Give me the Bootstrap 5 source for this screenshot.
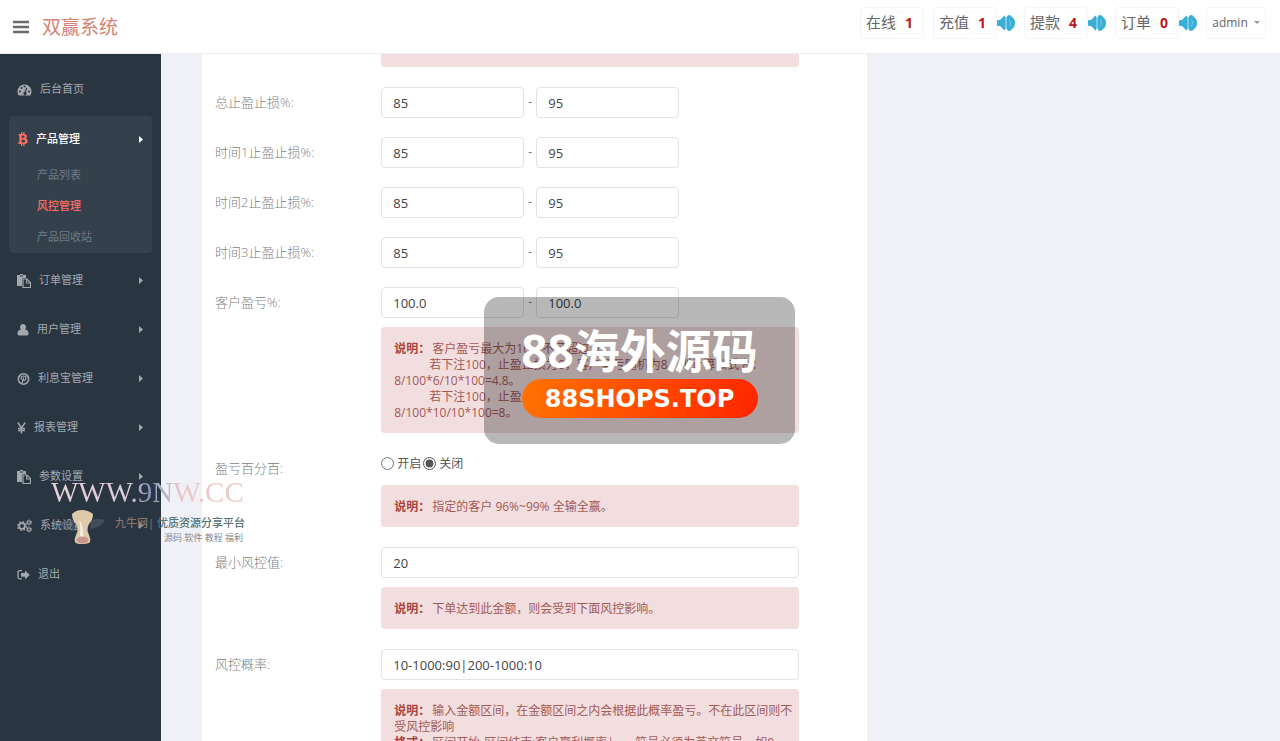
<!DOCTYPE html>
<html lang="zh-CN">
<head>
<meta charset="utf-8">
<meta name="viewport" content="width=device-width, initial-scale=1">
<title>双赢系统</title>
<link href="https://cdn.jsdelivr.net/npm/bootstrap@5.3.0/dist/css/bootstrap.min.css" rel="stylesheet">
<style>
body{font-family:"Open Sans","Noto Sans CJK SC",sans-serif;font-size:12px;color:#797979;background:#f0f0f7}
a{text-decoration:none}
.topbar{height:54px;padding:0 14px 0 13px;background:#fff;border-bottom:1px solid #eeeef2}
.burger{width:16px;height:20px;color:#6b6b6b}
.brand{font-size:19px;font-weight:400;color:#d58273;margin-left:13px;padding-top:2px}
.tools{gap:9px;padding-bottom:8px}
.stat{height:32px;width:64px;border:1px solid #f5f5f5;border-radius:4px;font-size:15px;color:#666;background:#fff;padding:0 0 0 5px}
.stat b{width:26px;border:1px solid #f9f9f9;color:#c01515;font-size:14px}
.user{height:32px;width:60px;border:1px solid #f5f5f5;border-radius:4px;font-size:12px;color:#666}
.user:after{margin-left:6px!important;border-width:3px!important;border-bottom:0!important;color:#999}
.side{width:161px;background:#2a3542;padding-top:11px;font-size:11px}
.side a{color:#a3a8ae}
.item{height:49px;padding:0 18px 0 17px}
.item svg.ico{height:14px;margin-right:8px;flex:none;fill:currentColor}
.item .caret{width:4px;height:7px;margin-left:auto;fill:currentColor}
.side .group{margin:2px 9px 3px;background:#35404d;border-radius:4px;padding:2px 0 0}
.group .item{height:42px;padding:0 9px;color:#fff;font-weight:500}
.side .subitem{display:flex;align-items:center;height:31px;padding-left:28px;color:#707b87}
.side .subitem.active{color:#ff6c60;font-weight:500}
.content{padding:0 41px}
.panel{max-width:665px;padding:0 13px;background:#fff}
.panel .row{--bs-gutter-x:26px;margin-bottom:20px}
.panel .lab{font-size:13px;line-height:30px;font-weight:300;color:#808080}
.panel .form-control{height:31px;margin-bottom:-1px;padding:0 11px;font-size:13px;color:#444;border:1px solid #e2e2e4;border-radius:4px}
.half{width:143px}
.dash{width:12px;text-align:center}
.note{background:#f2dede;border-radius:4px;padding:14px 6px 12px 13px;line-height:16px;color:#a25a58;margin-top:10px}
.note b{color:#a94442;margin-right:2px}
.note .in{margin-left:35px}
.note.cut{margin-top:0;height:13px;padding:0;border-radius:0 0 4px 4px}
.note.open{padding-bottom:24px}
.radios{height:22px;color:#555}
.radios input{width:13px;height:13px;margin:0 3px 2px 0;accent-color:#555}
.radios label{margin-right:2px}
.stamp{position:absolute;left:484px;top:297px;width:311px;height:147px;border-radius:15px;background:rgba(0,0,0,.28);color:#fff;pointer-events:none;padding-top:25px}
.stamp .name{font-size:46px;line-height:57px;font-weight:700}
.stamp .site{width:236px;height:39px;border-radius:20px;background:linear-gradient(100deg,#ff7200,#ff2600);font:bold 24px/41px "DejaVu Sans",sans-serif}
.promo{position:absolute;left:51px;top:474px;width:196px;pointer-events:none}
.promo .url{font:29px/36px "Liberation Serif",serif;background:linear-gradient(90deg,#e9d2da 0,#d8cbd8 40%,#8a92bb 50%,#b4b4ce 58%,#eac8ca 66%,#eecaca);-webkit-background-clip:text;background-clip:text;color:transparent;white-space:nowrap}
.promo svg{position:absolute;left:8px;top:36px}
.promo .tag{margin:4px 2px 0 0;font-size:11px;line-height:18px;font-weight:500;color:#567476}
.promo .tag span{color:#877468}
.promo .kinds{font-size:9px;line-height:11px;margin-right:4px;color:#888}
</style>
</head>
<body class="vh-100 overflow-hidden d-flex flex-column position-relative">
<svg class="d-none">
  <symbol id="caret" viewBox="0 0 4 7"><path d="M0 0l4 3.500-4 3.500z"/></symbol>
  <symbol id="paste" viewBox="0 0 14 14"><path d="M0 1h3V0h3v1h3v3H6L5 5v7H0z"/><path d="M3 2h3" stroke="#2a3542"/><path d="M6 5h4l3.500 3.500v5H6z" fill="#2a3542" stroke="currentColor" stroke-width="1.200"/><path d="M9.700 5v4h4" fill="none" stroke="currentColor" stroke-width="1.200"/></symbol>
  <symbol id="sound" viewBox="0 0 18 16"><path fill="#39aed6" d="M0 6q0-1 1-1h2l4-4q1-1 1 0v14q0 1-1 0l-4-4H1q-1 0-1-1zM10 2q0-2 2-2 2 0 3 2 3 2 3 6t-3 6q-1 2-3 2-2 0-2-2z"/><path fill="#7ccbe6" d="M8 2h2v12H8z"/><path d="M12.500 4.500q2 3.500 0 7" fill="none" stroke="#7ccbe6"/></symbol>
</svg>

<header class="topbar d-flex align-items-center flex-shrink-0">
  <button class="burger btn p-0 border-0 d-flex align-items-center" type="button" aria-label="菜单"><svg width="16" height="14" viewBox="0 0 16 14"><path d="M0 2h16M0 7h16M0 12h16" stroke="currentColor" stroke-width="2.400"/></svg></button>
  <a class="brand" href="#">双赢系统</a>
  <div class="tools d-flex align-items-center ms-auto">
    <a class="stat d-flex align-items-center" href="#">在线<b class="text-center">1</b></a>
    <div class="d-flex align-items-center"><a class="stat d-flex align-items-center" href="#">充值<b class="text-center">1</b></a><svg width="18" height="16"><use href="#sound"/></svg></div>
    <div class="d-flex align-items-center"><a class="stat d-flex align-items-center" href="#">提款<b class="text-center">4</b></a><svg width="18" height="16"><use href="#sound"/></svg></div>
    <div class="d-flex align-items-center"><a class="stat d-flex align-items-center" href="#">订单<b class="text-center">0</b></a><svg width="18" height="16"><use href="#sound"/></svg></div>
    <button class="user btn dropdown-toggle p-0 bg-white d-flex align-items-center justify-content-center" type="button" data-bs-toggle="dropdown">admin</button>
  </div>
</header>

<div class="d-flex flex-grow-1 overflow-hidden">
  <nav class="side flex-shrink-0">
    <a class="item d-flex align-items-center" href="#"><svg class="ico" width="15" viewBox="0 0 15 14"><path fill-rule="evenodd" d="M7.500 1.500A7 7 0 0 0 .500 8.500q0 2 1.200 4h11.600q1.200-2 1.200-4a7 7 0 0 0-7-7zM2 8.500a1 1 0 1 1 2 0a1 1 0 1 1-2 0zM3.500 5a1 1 0 1 1 2 0a1 1 0 1 1-2 0zM6.500 3.600a1 1 0 1 1 2 0a1 1 0 1 1-2 0zM11 8.500a1 1 0 1 1 2 0a1 1 0 1 1-2 0zM9.200 4.500l1 .4-1.300 4.200a1.600 1.600 0 1 1-1.200-.3z"/></svg>后台首页</a>
    <div class="group">
      <a class="item d-flex align-items-center text-white" href="#"><svg class="ico" width="10" viewBox="0 0 10 14"><path fill="#ff6c60" fill-rule="evenodd" d="M.500 2H3V0h1.200v2h1V0h1.300v2.100q2.500.4 2.500 2.400 0 1.500-1.400 2.100Q9.700 7.100 9.700 9q0 2.700-3.200 3V14H5.200v-2h-1v2H3v-2H0l.3-1.500h1v-7H.500zM3.700 3.500v2.600q3 .2 3-1.300t-3-1.300zM3.700 7.500v3q3.500.2 3.500-1.500t-3.500-1.500z"/></svg>产品管理<svg class="caret"><use href="#caret"/></svg></a>
      <a class="subitem" href="#">产品列表</a>
      <a class="subitem active" href="#">风控管理</a>
      <a class="subitem" href="#">产品回收站</a>
    </div>
    <a class="item d-flex align-items-center" href="#"><svg class="ico" width="14"><use href="#paste"/></svg>订单管理<svg class="caret"><use href="#caret"/></svg></a>
    <a class="item d-flex align-items-center" href="#"><svg class="ico" width="12" viewBox="0 0 12 14"><path d="M6 1a3 3.300 0 0 1 2.200 5.600Q11.500 7 11.500 10.500 11.500 12.500 10 12.500H2Q.500 12.500.500 10.500.500 7 3.800 6.600A3 3.300 0 0 1 6 1z"/></svg>用户管理<svg class="caret"><use href="#caret"/></svg></a>
    <a class="item d-flex align-items-center" href="#"><svg class="ico" width="13" viewBox="0 0 13 14"><circle cx="6.500" cy="7" r="5.200" fill="none" stroke="currentColor" stroke-width="1.600"/><path d="M5.200 11L6.500 5.500M4.500 7.500Q3.300 4 6.500 4t2.400 2.800Q8.200 9 6.300 8.300" fill="none" stroke="currentColor" stroke-width="1.200"/></svg>利息宝管理<svg class="caret"><use href="#caret"/></svg></a>
    <a class="item d-flex align-items-center" href="#"><svg class="ico" width="9" viewBox="0 0 9 14"><path d="M.800 1.500l3.700 5.500 3.700-5.500M4.500 7v5.500M1 7.500h7M1 9.600h7" fill="none" stroke="currentColor" stroke-width="1.500"/></svg>报表管理<svg class="caret"><use href="#caret"/></svg></a>
    <a class="item d-flex align-items-center" href="#"><svg class="ico" width="14"><use href="#paste"/></svg>参数设置<svg class="caret"><use href="#caret"/></svg></a>
    <a class="item d-flex align-items-center" href="#"><svg class="ico" width="15" viewBox="0 0 15 14"><g fill="none" stroke="currentColor"><circle cx="5" cy="7" r="2.900" stroke-width="1.800"/><circle cx="5" cy="7" r="4.300" stroke-width="1.400" stroke-dasharray="1.700 1.680"/><circle cx="12" cy="3.500" r="1.500" stroke-width="1.200"/><circle cx="12" cy="3.500" r="2.500" stroke-dasharray="1.100 .860"/><circle cx="12" cy="10.500" r="1.500" stroke-width="1.200"/><circle cx="12" cy="10.500" r="2.500" stroke-dasharray="1.100 .860"/></g></svg>系统设置<svg class="caret"><use href="#caret"/></svg></a>
    <a class="item d-flex align-items-center" href="#"><svg class="ico" width="13" viewBox="0 0 13 14"><path d="M5 2.700H2.500Q1 2.700 1 4.200v5.100q0 1.500 1.500 1.500H5" fill="none" stroke="currentColor" stroke-width="1.300"/><path d="M8 2.500L12.800 7 8 11.300V8.800H4V5h4z"/></svg>退出</a>
  </nav>

  <main class="content flex-grow-1 overflow-hidden">
    <form class="panel">
      <div class="row"><div class="col-8 offset-3"><div class="note cut"></div></div></div>
      <div class="row"><label class="lab col-3" for="a1">总止盈止损%:</label><div class="col-8 d-flex align-items-center"><input id="a1" class="form-control half" value="85"><span class="dash">-</span><input class="form-control half" value="95" aria-label="总止盈止损上限"></div></div>
      <div class="row"><label class="lab col-3" for="b1">时间1止盈止损%:</label><div class="col-8 d-flex align-items-center"><input id="b1" class="form-control half" value="85"><span class="dash">-</span><input class="form-control half" value="95" aria-label="时间1上限"></div></div>
      <div class="row"><label class="lab col-3" for="c1">时间2止盈止损%:</label><div class="col-8 d-flex align-items-center"><input id="c1" class="form-control half" value="85"><span class="dash">-</span><input class="form-control half" value="95" aria-label="时间2上限"></div></div>
      <div class="row"><label class="lab col-3" for="d1">时间3止盈止损%:</label><div class="col-8 d-flex align-items-center"><input id="d1" class="form-control half" value="85"><span class="dash">-</span><input class="form-control half" value="95" aria-label="时间3上限"></div></div>
      <div class="row"><label class="lab col-3" for="e1">客户盈亏%:</label><div class="col-8"><div class="d-flex align-items-center"><input id="e1" class="form-control half" value="100.0"><span class="dash">-</span><input class="form-control half" value="100.0" aria-label="客户盈亏上限"></div>
        <div class="note"><b>说明：</b>客户盈亏最大为10，不可超过10。<br><span class="in">若下注100，止盈止损为6，客户盈亏随机为8，则计算公式为：</span><br>8/100*6/10*100=4.8。<br><span class="in">若下注100，止盈止损为10，则计算公式为：</span><br>8/100*10/10*100=8。</div></div></div>
      <div class="row"><span class="lab col-3">盈亏百分百:</span><div class="col-8">
        <div class="radios d-flex align-items-center"><input type="radio" name="pct" id="on"><label for="on">开启</label><input type="radio" name="pct" id="off" checked><label for="off">关闭</label></div>
        <div class="note"><b>说明：</b>指定的客户 96%~99% 全输全赢。</div></div></div>
      <div class="row"><label class="lab col-3" for="min">最小风控值:</label><div class="col-8"><input id="min" class="form-control" value="20"><div class="note"><b>说明：</b>下单达到此金额，则会受到下面风控影响。</div></div></div>
      <div class="row"><label class="lab col-3" for="rate">风控概率:</label><div class="col-8"><input id="rate" class="form-control" value="10-1000:90|200-1000:10"><div class="note open"><b>说明：</b>输入金额区间，在金额区间之内会根据此概率盈亏。不在此区间则不受风控影响<br><b>格式：</b>区间开始-区间结束:客户赢利概率|...，符号必须为英文符号，如0-100:50</div></div></div>
    </form>
  </main>
</div>

<div class="stamp d-flex flex-column align-items-center"><div class="name">88海外源码</div><div class="site text-center">88SHOPS.TOP</div></div>
<div class="promo text-end">
  <div class="url text-start">WWW.9NW.CC</div>
  <svg width="46" height="36" viewBox="0 0 46 36"><path d="M14 10Q4 10 0 14q5 7 17 7zM32 10q8-2 14 0-3 7-15 9z" fill="#59657a" opacity=".5"/><path d="M13 4q4-4 10-4t11 4q0 6-4 10-3 6 0 11 2 4 1 7-2 2-8 2t-7-2q-1-3 1-7 3-5 0-11-4-4-4-10z" fill="#dfc9ab"/><path d="M20 10q5 5 4 18l-3-2q1-9-1-16z" fill="#f4eee0"/><ellipse cx="23.500" cy="30" rx="6" ry="3.500" fill="#c99688"/></svg>
  <div class="tag"><span>九牛网|</span> 优质资源分享平台</div>
  <div class="kinds">源码 软件 教程 福利</div>
</div>
<script src="https://cdn.jsdelivr.net/npm/bootstrap@5.3.0/dist/js/bootstrap.bundle.min.js"></script>
</body>
</html>
